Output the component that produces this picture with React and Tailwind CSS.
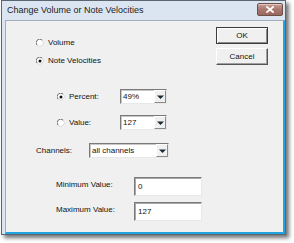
import React from "react";

function Radio({ checked }) {
  return (
    <svg width="8" height="8" viewBox="0 0 8 8" className="shrink-0">
      <circle cx="4" cy="4" r="3.5" fill="#ffffff" />
      <path d="M1.2 6.3 A3.3 3.3 0 0 1 6.3 1.2" fill="none" stroke="#6a6a6a" strokeWidth="1" />
      <path d="M6.3 1.2 A3.3 3.3 0 0 1 1.2 6.3" fill="none" stroke="#d8d8d8" strokeWidth="1" />
      {checked && <circle cx="4" cy="4" r="1.5" fill="#111111" />}
    </svg>
  );
}

function Arrow() {
  return (
    <svg width="7" height="4" viewBox="0 0 7 4">
      <path d="M0 0.5 H7 L3.5 4 Z" fill="#1a2a33" />
    </svg>
  );
}

function Combo({ value, w }) {
  return (
    <div
      className={`${w} h-[15px] flex bg-white border border-[#7a7a7a] border-r-[#e8e8e8] border-b-[#e8e8e8] shadow-[inset_1px_1px_0_#c8c8c8]`}
    >
      <div className="flex-1 flex items-center pl-[2px] leading-none">{value}</div>
      <div className="w-[12px] h-full flex items-center justify-center bg-[#f0f0f0] border border-white border-r-[#8a8a8a] border-b-[#8a8a8a]">
        <Arrow />
      </div>
    </div>
  );
}

function TextBox({ value }) {
  return (
    <div className="w-[68px] h-[19px] flex items-center pl-[3px] bg-white border border-[#7a7a7a] border-r-[#e8e8e8] border-b-[#e8e8e8] shadow-[inset_1px_1px_0_#a8a8a8] leading-none">
      {value}
    </div>
  );
}

export default function App() {
  return (
    <div
      className="w-[294px] h-[243px] bg-white text-[#111111]"
      style={{ fontFamily: '"Liberation Sans", Arial, sans-serif' }}
    >
      <div className="ml-[1px] w-[285px] h-[235px] flex flex-col bg-[#dbe5f1] border border-[#5c6670] shadow-[3px_3px_4px_rgba(0,0,0,0.55)]">
        {/* Title bar */}
        <div className="h-[19px] shrink-0 flex items-center justify-between pl-[5px] pr-[2px]">
          <span className="text-[9px] leading-none text-[#1b1b1b]">
            Change Volume or Note Velocities
          </span>
          <div className="w-[26px] h-[13px] mt-[-2px] flex items-center justify-center rounded-[2px] border border-[#6d5049] bg-[linear-gradient(#c8a098,#a8776d_50%,#9a675d)] shadow-[inset_0_1px_0_rgba(255,255,255,0.45)]">
            <svg width="8" height="7" viewBox="0 0 8 7">
              <path d="M1 1 L7 6 M7 1 L1 6" stroke="#ffffff" strokeWidth="1.8" strokeLinecap="square" />
            </svg>
          </div>
        </div>

        {/* Client area */}
        <div className="flex-1 ml-[3px] flex justify-between bg-[#f0f0f0] border border-[#a3aebb] border-r-2 border-b-2 border-r-[#21a3df] border-b-[#21a3df] text-[8px]">
          {/* Left column */}
          <div className="flex flex-col pl-[30px] pt-[16px]">
            <div className="h-[12px] flex items-center gap-[4px]">
              <Radio />
              <span>Volume</span>
            </div>
            <div className="h-[12px] mt-[6px] flex items-center gap-[4px]">
              <Radio checked />
              <span>Note Velocities</span>
            </div>

            <div className="h-[15px] mt-[22px] flex items-center pl-[21px]">
              <div className="w-[63px] flex items-center gap-[4px]">
                <Radio checked />
                <span>Percent:</span>
              </div>
              <Combo value="49%" w="w-[47px]" />
            </div>
            <div className="h-[15px] mt-[11px] flex items-center pl-[21px]">
              <div className="w-[63px] flex items-center gap-[4px]">
                <Radio />
                <span>Value:</span>
              </div>
              <Combo value="127" w="w-[47px]" />
            </div>

            <div className="h-[15px] mt-[13px] flex items-center">
              <span className="w-[53px]">Channels:</span>
              <Combo value="all channels" w="w-[80px]" />
            </div>

            <div className="h-[19px] mt-[19px] flex items-start pl-[20px]">
              <span className="w-[78px] mt-[2px]">Minimum Value:</span>
              <TextBox value="0" />
            </div>
            <div className="h-[19px] mt-[6px] flex items-start pl-[20px]">
              <span className="w-[78px] mt-[2px]">Maximum Value:</span>
              <TextBox value="127" />
            </div>
          </div>

          {/* Right column: buttons */}
          <div className="flex flex-col pt-[6px] pr-[15px] gap-[4px]">
            <div className="w-[52px] h-[17px] flex items-center justify-center bg-[#f0f0f0] border border-[#3c3c3c] shadow-[inset_1px_1px_0_#ffffff,inset_-1px_-1px_0_#8a8a8a]">
              OK
            </div>
            <div className="w-[52px] h-[17px] flex items-center justify-center bg-[#f0f0f0] border border-white border-r-[#555555] border-b-[#555555] shadow-[inset_-1px_-1px_0_#a0a0a0]">
              Cancel
            </div>
          </div>
        </div>
      </div>
    </div>
  );
}
